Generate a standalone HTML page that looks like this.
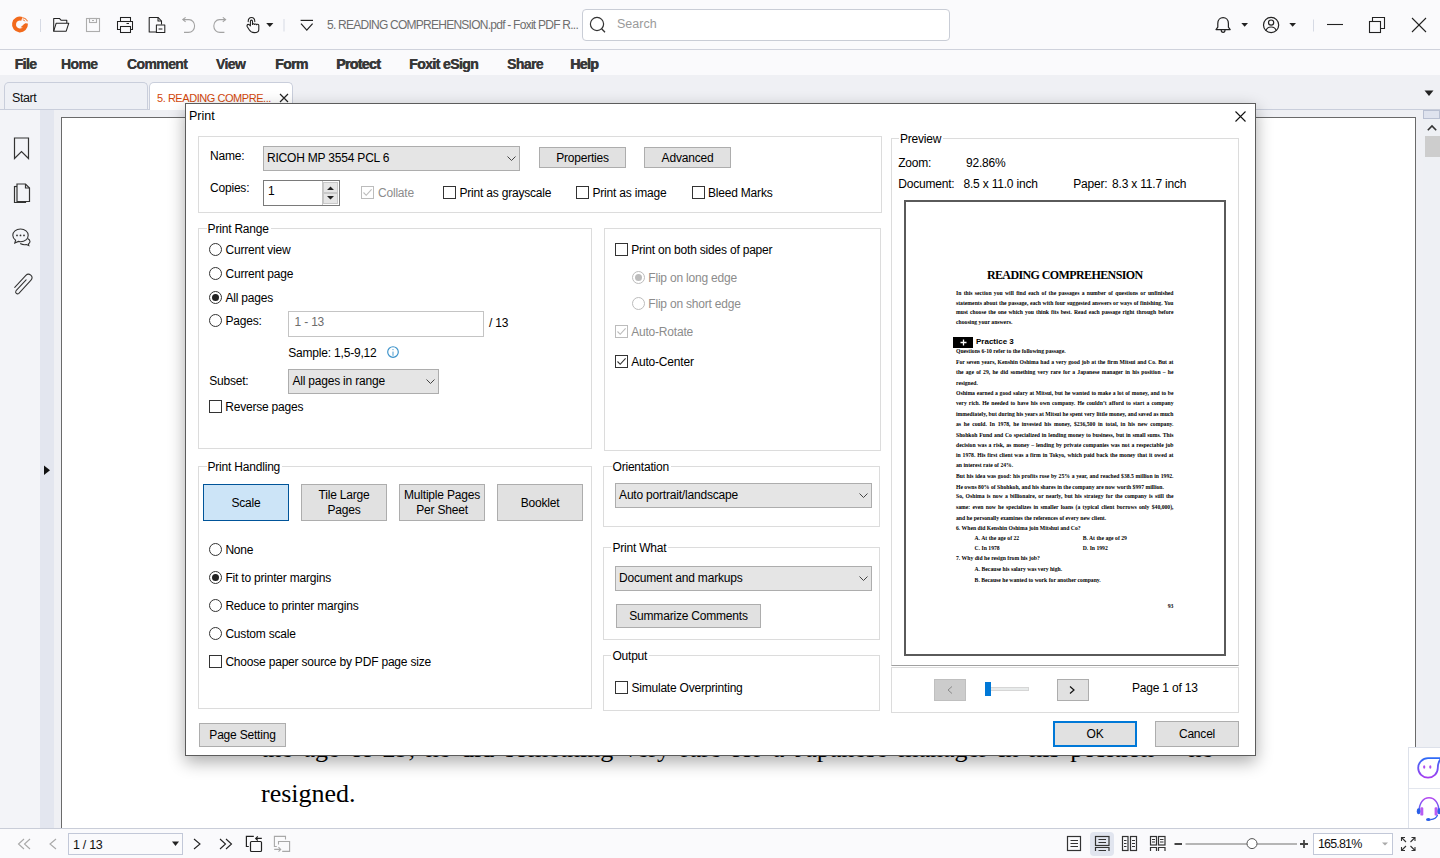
<!DOCTYPE html>
<html><head><meta charset="utf-8">
<style>
*{margin:0;padding:0;box-sizing:border-box}
html,body{width:1440px;height:858px;overflow:hidden;background:#f7f8fb;font-family:"Liberation Sans",sans-serif;color:#000}
.a{position:absolute}
.t{position:absolute;white-space:nowrap;font-size:12px;line-height:15px;letter-spacing:-0.2px}
svg{position:absolute;overflow:visible}
/* app chrome */
#top{left:0;top:0;width:1440px;height:49px;background:#fafafc}
#topline{left:0;top:49px;width:1440px;height:1px;background:#cfd2dc}
#menu{left:0;top:50px;width:1440px;height:25px;background:#fafafc}
.mi{position:absolute;top:56px;font-size:14px;font-weight:bold;color:#383838;line-height:17px;white-space:nowrap;letter-spacing:-0.6px}
#tabbar{left:0;top:75px;width:1440px;height:35px;background:#eff0f4}
#sidebar{left:0;top:110px;width:40px;height:718px;background:#f3f4f8}
#stripe{left:40px;top:110px;width:14px;height:718px;background:#e3e6ef}
#docarea{left:54px;top:110px;width:1366px;height:718px;background:#eff0f4}
#page{left:61px;top:117px;width:1355px;height:720px;background:#fff;border:1px solid #6a6a6a}
#scroll{left:1420px;top:110px;width:20px;height:718px;background:#eef0f5}
#status{left:0;top:828px;width:1440px;height:30px;background:#fafafc;border-top:1px solid #c9cdd8}
/* dialog */
#shadow{left:185px;top:104px;width:1071px;height:652px;box-shadow:0 4px 18px rgba(0,0,0,0.35)}
#dlg{left:185px;top:103px;width:1071px;height:653px;background:#fff;border:1px solid #5a5a5a}
.grp{position:absolute;border:1px solid #dcdcdc}
.gl{position:absolute;background:#fff;padding:0 2px 0 1px;font-size:12px;line-height:15px;white-space:nowrap;letter-spacing:-0.2px}
.btn{position:absolute;background:#e1e1e1;border:1px solid #adadad;font-size:12px;text-align:center;white-space:nowrap;letter-spacing:-0.2px}
.cb{position:absolute;width:13px;height:13px;border:1px solid #333;background:#fff}
.rd{position:absolute;width:13px;height:13px;border:1px solid #333;border-radius:50%;background:#fff}
.rd.on::after{content:"";position:absolute;left:2px;top:2px;width:7px;height:7px;border-radius:50%;background:#1a1a1a}
.combo{position:absolute;background:#e5e5e5;border:1px solid #adadad;font-size:12px;white-space:nowrap;letter-spacing:-0.2px}
.dis{color:#8c8c8c}

.pv{position:absolute;white-space:nowrap;font-family:"Liberation Serif",serif;font-weight:bold;line-height:8px;color:#000}
.bgtxt{position:absolute;white-space:nowrap;font-family:"Liberation Serif",serif;font-size:26px;line-height:30px;color:#000}
</style></head><body>
<div id="top" class="a"></div>
<div id="topline" class="a"></div>
<div id="menu" class="a"></div>
<div id="tabbar" class="a"></div>
<div id="sidebar" class="a"></div>
<div id="stripe" class="a"></div>
<div id="docarea" class="a"></div>
<div id="page" class="a"></div>
<div id="scroll" class="a"></div>
<div id="status" class="a"></div>
<div class="bgtxt" style="left:261px;top:733.7px;width:952px;text-align:justify;text-align-last:justify">the age of 29, he did something very rare for a Japanese manager in his position – he</div>
<div class="bgtxt" style="left:261px;top:778.5px">resigned.</div>
<svg style="left:0;top:828px" width="1440" height="30"><g fill="none" stroke="#a8a8a8" stroke-width="1.1"><path d="M24 11 L18.5 16 L24 21 M30 11 L24.5 16 L30 21"/><path d="M56 11 L50 16 L56 21"/></g><g fill="none" stroke="#222" stroke-width="1.1"><path d="M194 11 L200 16 L194 21"/><path d="M220 11 L225.5 16 L220 21 M226 11 L231.5 16 L226 21"/></g><g fill="none" stroke="#222" stroke-width="1.2"><path d="M253.8 8.4 H246.4 V18.5 H248.8"/><path d="M261.8 10.4 H255.8 M257.8 8.3 L255.7 10.4 L257.8 12.5"/><rect x="250.5" y="13.5" width="11" height="10" rx="1"/></g><g fill="none" stroke="#a8a8a8" stroke-width="1.1"><path d="M276.8 18.5 H274.4 V8.4 H285.5 V11.5"/><path d="M278.5 16.6 V13.5 H289.6 V23.4 H282.2"/><path d="M274.2 21.4 H280.7 M278.5 19.2 L280.7 21.4 L278.5 23.6"/></g><path d="M172 13.5 H179 L175.5 18 Z" fill="#222"/><rect x="1090" y="4" width="24" height="24" rx="4" fill="#e1e5ef"/><g fill="none" stroke="#333" stroke-width="1.2"><rect x="1067.5" y="8.5" width="13" height="14"/><path d="M1070.5 12.5 H1078 M1070.5 15.5 H1078 M1070.5 18.5 H1078"/><rect x="1095.5" y="8.5" width="13.5" height="9"/><path d="M1098.5 11.5 H1106 M1098.5 14.5 H1106"/><path d="M1095.5 23 V19.5 H1109 V23 M1098.5 22.5 H1106"/><rect x="1122.5" y="8.5" width="5.5" height="14"/><rect x="1130.5" y="8.5" width="6" height="14"/><path d="M1124 12.5 H1126.5 M1124 15.5 H1126.5 M1124 18.5 H1126.5 M1132 12.5 H1135 M1132 15.5 H1135 M1132 18.5 H1135"/><rect x="1150.5" y="8.5" width="6" height="8.5"/><rect x="1158.5" y="8.5" width="6.5" height="8.5"/><path d="M1152 11.5 H1155 M1152 14 H1155 M1160 11.5 H1163.5 M1160 14 H1163.5"/><path d="M1150.5 23 V19.5 H1156.5 V23 M1158.5 23 V19.5 H1165 V23"/></g><g fill="none" stroke="#444" stroke-width="1.8"><path d="M1174.5 16 H1182 M1300 16 H1308 M1304 12 V20"/></g><line x1="1185.5" y1="16" x2="1297" y2="16" stroke="#b5b5b5" stroke-width="2"/><circle cx="1252" cy="15.6" r="5" fill="#fff" stroke="#555" stroke-width="1"/><rect x="1313.5" y="5.5" width="79" height="21" fill="#fff" stroke="#c2c8d8"/><path d="M1382 14.5 H1388 L1385 17.5 Z" fill="#aaa"/><g fill="none" stroke="#333" stroke-width="1.1"><path d="M1401.5 13 V9.5 H1405 M1401.5 9.5 L1406 14 M1415 13 V9.5 H1411.5 M1415 9.5 L1410.5 14 M1401.5 19 V22.5 H1405 M1401.5 22.5 L1406 18 M1415 19 V22.5 H1411.5 M1415 22.5 L1410.5 18"/></g></svg>
<div class="t" style="left:73px;top:838px;font-size:12.5px;letter-spacing:-0.3px;color:#111">1 / 13</div>
<div class="a" style="left:68px;top:833px;width:115px;height:22px;border:1px solid #c2c8d8;background:transparent"></div>
<div class="t" style="left:1318px;top:837px;font-size:12.5px;letter-spacing:-0.85px;color:#111">165.81%</div>
<div class="a" style="left:1416px;top:110px;width:7px;height:718px;background:#eff0f4"></div>
<div class="a" style="left:1423px;top:110px;width:17px;height:718px;background:#eef0f4"></div>
<div class="a" style="left:1423px;top:110px;width:17px;height:9px;background:#dfe3ee;border:1px solid #b9c0d2"></div>
<svg style="left:1426px;top:124px" width="12" height="8"><path d="M1.8 6.2 L6 2 L10.2 6.2" fill="none" stroke="#333" stroke-width="1.6"/></svg>
<div class="a" style="left:1425px;top:136px;width:15px;height:21px;background:#cdcdcd"></div>
<div class="a" style="left:1408px;top:747px;width:32px;height:81px;background:#fff;border:1px solid #dde1ea;border-right:none;border-bottom:none"></div>
<div class="a" style="left:1409px;top:788px;width:31px;height:1px;background:#e3e6ee"></div>
<svg style="left:1408px;top:747px" width="32" height="81">
<defs><linearGradient id="g1" x1="0" y1="0" x2="0" y2="1"><stop offset="0" stop-color="#2f6bf7"/><stop offset="1" stop-color="#a53ef0"/></linearGradient>
<linearGradient id="g2" x1="0" y1="0" x2="0" y2="1"><stop offset="0" stop-color="#b548f0"/><stop offset="1" stop-color="#3f6cf2"/></linearGradient></defs>
<path d="M33 11.2 H20 C14.6 11.2 10.2 15.5 10.2 20.9 C10.2 26.3 14.6 30.6 20 30.6 C25.4 30.6 29.8 26.3 29.8 20.9 C29.8 17.4 30.6 14.4 33 11.2 Z" fill="none" stroke="url(#g1)" stroke-width="1.8"/>
<ellipse cx="16.2" cy="20" rx="1.1" ry="1.8" fill="#b04ff0"/><ellipse cx="22.3" cy="20" rx="1.1" ry="1.8" fill="#b04ff0"/>
<path d="M11 65 C11 56 15.4 50.8 21 50.8 C26.6 50.8 31 56 31 65" fill="none" stroke="url(#g2)" stroke-width="1.4"/>
<rect x="12.3" y="60.2" width="3" height="8.4" rx="1.2" fill="#b85cf2"/><rect x="26.6" y="60.2" width="3" height="8.4" rx="1.2" fill="#b85cf2"/>
<ellipse cx="10.6" cy="64.2" rx="1.8" ry="3" fill="#2b5fe8"/><ellipse cx="31.2" cy="64.2" rx="1.8" ry="3" fill="#2b5fe8"/>
<path d="M29.5 68 C28.6 71 26 72.4 22.4 72.6" fill="none" stroke="#2b5fe8" stroke-width="1.2"/>
<ellipse cx="20.4" cy="72.6" rx="2.4" ry="1.5" fill="#2b5fe8"/>
</svg>
<!-- toolbar icons -->
<svg style="left:0;top:0" width="1440" height="49" viewBox="0 0 1440 49">
 <!-- logo -->
 <g>
  <path d="M25.78 23.99 A5.9 5.9 0 1 1 21.92 18.96" fill="none" stroke="#f26a1c" stroke-width="4"/>
  <path d="M20.6 27.2 L25.2 23.2 L27.6 23.4 L27.2 26.4 C25.6 27.6 23.2 28 20.6 27.2 Z" fill="#f26a1c"/>
  <path d="M22.4 17.6 C24.6 18 26.4 19.2 27.6 21.2" fill="none" stroke="#f48a4c" stroke-width="1.2"/>
  <path d="M22.8 19.8 C23.8 20.1 24.6 20.6 25.2 21.3" fill="none" stroke="#f26a1c" stroke-width="0.9"/>
 </g>
 <line x1="40.5" y1="19" x2="40.5" y2="32" stroke="#d6dae4" stroke-width="1"/>
 <!-- open folder -->
 <g fill="none" stroke="#222" stroke-width="1.05" stroke-linejoin="round">
  <path d="M53.7 31.2 V18.4 H59.4 L61 20.2 H66.8 V23"/>
  <path d="M53.7 31.2 L56.2 23.2 H68.8 L66.2 31.2 Z"/>
 </g>
 <!-- save (disabled) -->
 <g fill="none" stroke="#adadad" stroke-width="1.1">
  <rect x="86.5" y="18.5" width="13" height="13"/>
  <rect x="89.5" y="18.5" width="7" height="4"/>
  <line x1="92" y1="20.5" x2="94" y2="20.5"/>
 </g>
 <!-- printer -->
 <g fill="none" stroke="#222" stroke-width="1.05">
  <rect x="120.5" y="17.5" width="10" height="4"/>
  <path d="M120.5 29.5 H117.5 V21.5 H132.5 V29.5 H130.5"/>
  <rect x="120.5" y="26.5" width="10" height="6"/>
  <line x1="126.5" y1="23.5" x2="129" y2="23.5"/>
 </g>
 <!-- doc with clipboard -->
 <g fill="none" stroke="#222" stroke-width="1.05" stroke-linejoin="round">
  <path d="M156 32 H149.2 V17.4 H158 L161.5 21 V24.4"/>
  <path d="M158 17.4 V21 H161.5"/>
  <rect x="156.4" y="25" width="8.4" height="7.4"/>
  <line x1="158.6" y1="29" x2="162.4" y2="29"/>
 </g>
 <!-- undo / redo -->
 <g fill="none" stroke="#a3a3a3" stroke-width="1.1">
  <path d="M183 19.6 H189 C192.4 19.6 194.6 22.6 194.6 26 C194.6 29.6 192 32.4 188.4 32.4 H184"/>
  <path d="M185.6 17.4 L182.8 19.6 L185.6 21.8"/>
  <path d="M225.6 19.6 H219.4 C216 19.6 213.8 22.6 213.8 26 C213.8 29.6 216.4 32.4 220 32.4 H224.4"/>
  <path d="M222.8 17.4 L225.6 19.6 L222.8 21.8"/>
 </g>
 <!-- hand -->
 <g fill="none" stroke="#222" stroke-width="1.1" stroke-linejoin="round" stroke-linecap="round">
  <path d="M250.4 25.8 V21.2 C250.4 19.8 252.5 19.8 252.5 21.2 V24.4 M252.5 24.4 C252.7 23.5 254.3 23.5 254.4 24.5 M254.4 24.5 C254.7 23.8 256.4 23.8 256.6 24.8 M256.6 24.8 C256.9 24 258.7 24.1 258.8 25.2 V29.4 C258.8 31.4 256.8 32.6 254.4 32.6 C252 32.6 250.2 31.6 249.2 29.8 L247.3 26.8 C246.7 25.8 247.1 24.4 248.2 24.4 C249.2 24.4 249.8 25 250.4 25.8"/>
  <path d="M248.2 21.6 C248.2 16.2 254.8 16.2 254.8 21.6"/>
 </g>
 <path d="M266.2 23 H273.4 L269.8 27 Z" fill="#222"/>
 <line x1="284" y1="19" x2="284" y2="31.5" stroke="#d6dae4"/>
 <g fill="none" stroke="#222" stroke-width="1.2">
  <line x1="300.6" y1="20.4" x2="313" y2="20.4"/>
  <path d="M301 23.6 L306.8 30.2 L312.6 23.6"/>
 </g>
 <!-- right icons -->
 <g fill="none" stroke="#222" stroke-width="1.2" stroke-linejoin="round">
  <path d="M1216 29.6 H1230.2 L1228.4 27.2 V23.4 C1228.4 19.8 1226 17.6 1223.1 17.6 C1220.2 17.6 1217.8 19.8 1217.8 23.4 V27.2 Z"/>
  <path d="M1221.2 30 C1221.2 31.6 1222 32.4 1223.1 32.4 C1224.2 32.4 1225 31.6 1225 30"/>
  <circle cx="1271.1" cy="25" r="7.6"/>
  <circle cx="1271.1" cy="22.6" r="2.6"/>
  <path d="M1266 30.6 C1266.8 28 1268.6 27 1271.1 27 C1273.6 27 1275.4 28 1276.2 30.6"/>
 </g>
 <path d="M1241.3 23 H1248 L1244.65 26.8 Z M1289.3 23 H1296 L1292.65 26.8 Z" fill="#222"/>
 <line x1="1313.5" y1="19.5" x2="1313.5" y2="31.5" stroke="#d6dae4"/>
 <g fill="none" stroke="#222" stroke-width="1.1">
  <line x1="1327" y1="24.5" x2="1343" y2="24.5"/>
  <rect x="1369.5" y="21.5" width="11" height="11"/>
  <path d="M1372.5 21.5 V17.5 H1384.5 V28.5 H1380.5"/>
  <line x1="1412" y1="18" x2="1426" y2="32"/>
  <line x1="1426" y1="18" x2="1412" y2="32"/>
 </g>
</svg>
<div class="t" style="left:327px;top:18px;color:#6e6e6e;letter-spacing:-0.75px">5. READING COMPREHENSION.pdf - Foxit PDF R...</div>
<div class="a" style="left:582px;top:9px;width:368px;height:32px;background:#fff;border:1px solid #c9cdd6;border-radius:4px"></div>
<svg style="left:588px;top:15px" width="20" height="20"><circle cx="9" cy="9" r="6.6" fill="none" stroke="#333" stroke-width="1.2"/><line x1="13.6" y1="13.8" x2="17" y2="17.2" stroke="#333" stroke-width="1.3"/></svg>
<div class="t" style="left:617px;top:17px;color:#9a9a9a;font-size:12.5px;letter-spacing:0">Search</div>

<!-- tabs -->
<div class="a" style="left:4px;top:82px;width:144px;height:28px;background:#eef0f5;border:1px solid #c9cedb;border-bottom:none;border-radius:5px 5px 0 0"></div>
<div class="t" style="left:12px;top:91px;color:#111;font-size:12.5px;letter-spacing:-0.4px">Start</div>
<div class="a" style="left:149px;top:82px;width:144px;height:28px;background:#fff;border:1px solid #c9cedb;border-bottom:none;border-radius:5px 5px 0 0"></div>
<div class="t" style="left:157px;top:91px;color:#d2470b;font-size:11px;letter-spacing:-0.45px">5. READING COMPRE...</div>
<svg style="left:279px;top:93px" width="10" height="10"><path d="M1 1 L9 9 M9 1 L1 9" stroke="#222" stroke-width="1.2"/></svg>
<div class="a" style="left:0;top:109px;width:149px;height:1px;background:#c9cedb"></div>
<div class="a" style="left:293px;top:109px;width:1147px;height:1px;background:#c9cedb"></div>
<svg style="left:1424px;top:90px" width="10" height="7"><path d="M0.5 0.5 H9.5 L5 6 Z" fill="#222"/></svg>

<!-- sidebar icons -->
<svg style="left:0;top:110px" width="61" height="718">
 <g fill="none" stroke="#333" stroke-width="1.2" stroke-linejoin="miter">
  <path d="M14.5 28 H28.5 V48.5 L21.5 41.5 L14.5 48.5 Z"/>
  <path d="M17 76.5 V74 H25.5 L29.5 78 V91.5 H17 Z"/>
  <path d="M25.5 74 V78 H29.5"/>
  <path d="M17 76.5 H14.5 V92.5 H25.5 V91.5"/>
  <path d="M14.5 76.5 H17"/>
 </g>
 <g fill="none" stroke="#333" stroke-width="1.1">
  <path d="M20.5 119 C16 119 12.8 121.8 12.8 125.3 C12.8 127.3 13.8 129 15.6 130.2 L14.8 133 L18.4 131.4 C19.1 131.6 19.8 131.7 20.5 131.7 C25 131.7 28.2 128.9 28.2 125.3 C28.2 121.8 25 119 20.5 119 Z"/>
  <path d="M27.6 128.6 C29.2 129.4 30 130.4 30 131.6 C30 132.6 29.4 133.4 28.4 134 L28.8 135.6 L26.4 134.6 C24.2 135 22 134.6 20.2 133.6"/>
 </g>
 <g fill="#333"><circle cx="17" cy="125.4" r="0.9"/><circle cx="20.5" cy="125.4" r="0.9"/><circle cx="24" cy="125.4" r="0.9"/></g>
 <path d="M14.75 177.44 L25.85 165.39 A3.5 3.5 0 0 1 31.00 170.13 L18.88 183.28 A1.9 1.9 0 0 1 16.09 180.71 L26.11 169.83" fill="none" stroke="#333" stroke-width="1.05" stroke-linecap="round"/>
 <path d="M44 355.4 L50 360.2 L44 365 Z" fill="#111"/>
</svg>
<div class="mi" style="left:15px">File</div>
<div class="mi" style="left:61px">Home</div>
<div class="mi" style="left:127px">Comment</div>
<div class="mi" style="left:216px">View</div>
<div class="mi" style="left:275px">Form</div>
<div class="mi" style="left:336px">Protect</div>
<div class="mi" style="left:409px">Foxit eSign</div>
<div class="mi" style="left:507px">Share</div>
<div class="mi" style="left:570px">Help</div>

<div class="mi" style="left:14.4px">File</div>
<div class="mi" style="left:61px">Home</div>
<div class="mi" style="left:127px">Comment</div>
<div class="mi" style="left:216px">View</div>
<div class="mi" style="left:275.6px">Form</div>
<div class="mi" style="left:336.7px">Protect</div>
<div class="mi" style="left:409.6px">Foxit eSign</div>
<div class="mi" style="left:507.3px">Share</div>
<div class="mi" style="left:570.7px">Help</div>

<!-- ===== DIALOG ===== -->
<div class="a" style="left:185px;top:103px;width:1071px;height:653px;box-shadow:0 6px 16px rgba(0,0,0,0.33);background:#fff"></div>
<div class="a" style="left:185px;top:103px;width:1071px;height:653px;border:1px solid #5c5c5c;background:#fff"></div>
<div class="t " style="left:189px;top:109.0px;font-size:12.5px;letter-spacing:0">Print</div>
<svg style="left:1235px;top:111px" width="11" height="11"><path d="M0.5 0.5 L10.5 10.5 M10.5 0.5 L0.5 10.5" stroke="#111" stroke-width="1.1"/></svg>
<div class="a" style="left:198px;top:136px;width:684px;height:77px;border:1px solid #dcdcdc"></div>
<div class="t " style="left:210px;top:149.0px;">Name:</div>
<div class="a" style="left:263px;top:146px;width:257px;height:25px;background:#e5e5e5;border:1px solid #adadad"></div>
<div class="t " style="left:267px;top:151.0px;">RICOH MP 3554 PCL 6</div>
<svg style="left:507px;top:156px" width="9" height="5"><path d="M0.5 0.5 L4.5 4.5 L8.5 0.5" fill="none" stroke="#444" stroke-width="1"/></svg>
<div class="a" style="left:539px;top:147px;width:87px;height:21px;background:#e1e1e1;border:1px solid #adadad;"></div>
<div class="t" style="left:539px;width:87px;text-align:center;top:151.0px">Properties</div>
<div class="a" style="left:644px;top:147px;width:87px;height:21px;background:#e1e1e1;border:1px solid #adadad;"></div>
<div class="t" style="left:644px;width:87px;text-align:center;top:151.0px">Advanced</div>
<div class="t " style="left:210px;top:181.0px;">Copies:</div>
<div class="a" style="left:263px;top:180px;width:77px;height:26px;border:1px solid #7a7a7a;background:#fff"></div>
<div class="a" style="left:322px;top:181px;width:17px;height:24px;border-left:1px solid #c4c4c4;background:#fff"></div>
<div class="a" style="left:323px;top:182px;width:15px;height:11px;background:#e6e6e6;border:1px solid #c8c8c8"></div>
<div class="a" style="left:323px;top:193px;width:15px;height:11px;background:#e6e6e6;border:1px solid #c8c8c8"></div>
<svg style="left:326px;top:185px" width="9" height="16"><path d="M1 5 L4.5 1.5 L8 5 Z M1 11 L4.5 14.5 L8 11 Z" fill="#222"/></svg>
<div class="t " style="left:268px;top:184.0px;">1</div>
<svg style="left:361px;top:186px" width="13" height="13"><rect x="0.5" y="0.5" width="12" height="12" fill="#fff" stroke="#bcbcbc" stroke-width="1"/><path d="M2.5 6.5 L5.2 9.3 L10.6 3.4" fill="none" stroke="#bcbcbc" stroke-width="1.1"/></svg>
<div class="t dis" style="left:378px;top:186.0px;">Collate</div>
<svg style="left:443px;top:186px" width="13" height="13"><rect x="0.5" y="0.5" width="12" height="12" fill="#fff" stroke="#333" stroke-width="1"/></svg>
<div class="t " style="left:459.5px;top:186.0px;">Print as grayscale</div>
<svg style="left:576px;top:186px" width="13" height="13"><rect x="0.5" y="0.5" width="12" height="12" fill="#fff" stroke="#333" stroke-width="1"/></svg>
<div class="t " style="left:592.5px;top:186.0px;">Print as image</div>
<svg style="left:692px;top:186px" width="13" height="13"><rect x="0.5" y="0.5" width="12" height="12" fill="#fff" stroke="#333" stroke-width="1"/></svg>
<div class="t " style="left:708px;top:186.0px;">Bleed Marks</div>
<div class="a" style="left:198px;top:228px;width:394px;height:221px;border:1px solid #dcdcdc"></div>
<div class="gl" style="left:206.6px;top:221.9px">Print Range</div>
<svg style="left:209px;top:243px" width="13" height="13"><circle cx="6.5" cy="6.5" r="6" fill="#fff" stroke="#333" stroke-width="1"/></svg>
<div class="t " style="left:225.5px;top:243.0px;">Current view</div>
<svg style="left:209px;top:267px" width="13" height="13"><circle cx="6.5" cy="6.5" r="6" fill="#fff" stroke="#333" stroke-width="1"/></svg>
<div class="t " style="left:225.5px;top:267.0px;">Current page</div>
<svg style="left:209px;top:291px" width="13" height="13"><circle cx="6.5" cy="6.5" r="6" fill="#fff" stroke="#333" stroke-width="1"/><circle cx="6.5" cy="6.5" r="3.5" fill="#222"/></svg>
<div class="t " style="left:225.5px;top:291.0px;">All pages</div>
<svg style="left:209px;top:314px" width="13" height="13"><circle cx="6.5" cy="6.5" r="6" fill="#fff" stroke="#333" stroke-width="1"/></svg>
<div class="t " style="left:225.5px;top:314.0px;">Pages:</div>
<div class="a" style="left:288px;top:311px;width:196px;height:26px;border:1px solid #c4c4c4;background:#fff"></div>
<div class="t " style="left:294.6px;top:315.0px;color:#6d6d6d">1 - 13</div>
<div class="t " style="left:489px;top:316.0px;">/ 13</div>
<div class="t " style="left:288.3px;top:346.0px;">Sample: 1,5-9,12</div>
<svg style="left:386.5px;top:346px" width="12" height="12"><circle cx="6" cy="6" r="5.3" fill="none" stroke="#3b92ca" stroke-width="1.15"/><path d="M6 5.6 V9.8" stroke="#3b92ca" stroke-width="0.9"/><circle cx="6" cy="3.6" r="0.55" fill="#3b92ca"/></svg>
<div class="t " style="left:209.2px;top:374.0px;">Subset:</div>
<div class="a" style="left:288px;top:369px;width:151px;height:25px;background:#e5e5e5;border:1px solid #adadad"></div>
<div class="t " style="left:292.4px;top:374.0px;">All pages in range</div>
<svg style="left:425.5px;top:379px" width="9" height="5"><path d="M0.5 0.5 L4.5 4.5 L8.5 0.5" fill="none" stroke="#444" stroke-width="1"/></svg>
<svg style="left:209px;top:400px" width="13" height="13"><rect x="0.5" y="0.5" width="12" height="12" fill="#fff" stroke="#333" stroke-width="1"/></svg>
<div class="t " style="left:225.2px;top:400.0px;">Reverse pages</div>
<div class="a" style="left:604px;top:228px;width:277px;height:223px;border:1px solid #dcdcdc"></div>
<svg style="left:615px;top:243px" width="13" height="13"><rect x="0.5" y="0.5" width="12" height="12" fill="#fff" stroke="#333" stroke-width="1"/></svg>
<div class="t " style="left:631.2px;top:243.0px;">Print on both sides of paper</div>
<svg style="left:632px;top:271px" width="13" height="13"><circle cx="6.5" cy="6.5" r="6" fill="#fff" stroke="#bcbcbc" stroke-width="1"/><circle cx="6.5" cy="6.5" r="3.5" fill="#bcbcbc"/></svg>
<div class="t dis" style="left:648.3px;top:271.0px;">Flip on long edge</div>
<svg style="left:632px;top:297px" width="13" height="13"><circle cx="6.5" cy="6.5" r="6" fill="#fff" stroke="#bcbcbc" stroke-width="1"/></svg>
<div class="t dis" style="left:648.3px;top:297.0px;">Flip on short edge</div>
<svg style="left:615px;top:325px" width="13" height="13"><rect x="0.5" y="0.5" width="12" height="12" fill="#fff" stroke="#bcbcbc" stroke-width="1"/><path d="M2.5 6.5 L5.2 9.3 L10.6 3.4" fill="none" stroke="#bcbcbc" stroke-width="1.1"/></svg>
<div class="t dis" style="left:631.2px;top:325.0px;">Auto-Rotate</div>
<svg style="left:615px;top:355px" width="13" height="13"><rect x="0.5" y="0.5" width="12" height="12" fill="#fff" stroke="#333" stroke-width="1"/><path d="M2.5 6.5 L5.2 9.3 L10.6 3.4" fill="none" stroke="#333" stroke-width="1.1"/></svg>
<div class="t " style="left:631.2px;top:355.0px;">Auto-Center</div>
<div class="a" style="left:198px;top:466px;width:394px;height:243px;border:1px solid #dcdcdc"></div>
<div class="gl" style="left:206.5px;top:459.6px">Print Handling</div>
<div class="a" style="left:203px;top:484px;width:86px;height:37px;background:#cce4f7;border:1px solid #005499"></div>
<div class="t" style="left:203px;width:86px;text-align:center;top:495.7px">Scale</div>
<div class="a" style="left:301px;top:484px;width:86px;height:37px;background:#e1e1e1;border:1px solid #adadad;"></div>
<div class="t" style="left:301px;width:86px;text-align:center;top:488.0px">Tile Large</div>
<div class="t" style="left:301px;width:86px;text-align:center;top:503.0px">Pages</div>
<div class="a" style="left:399px;top:484px;width:86px;height:37px;background:#e1e1e1;border:1px solid #adadad;"></div>
<div class="t" style="left:399px;width:86px;text-align:center;top:488.0px">Multiple Pages</div>
<div class="t" style="left:399px;width:86px;text-align:center;top:503.0px">Per Sheet</div>
<div class="a" style="left:497px;top:484px;width:86px;height:37px;background:#e1e1e1;border:1px solid #adadad;"></div>
<div class="t" style="left:497px;width:86px;text-align:center;top:495.7px">Booklet</div>
<svg style="left:209px;top:543px" width="13" height="13"><circle cx="6.5" cy="6.5" r="6" fill="#fff" stroke="#333" stroke-width="1"/></svg>
<div class="t " style="left:225.4px;top:543.0px;">None</div>
<svg style="left:209px;top:571px" width="13" height="13"><circle cx="6.5" cy="6.5" r="6" fill="#fff" stroke="#333" stroke-width="1"/><circle cx="6.5" cy="6.5" r="3.5" fill="#222"/></svg>
<div class="t " style="left:225.4px;top:571.0px;">Fit to printer margins</div>
<svg style="left:209px;top:599px" width="13" height="13"><circle cx="6.5" cy="6.5" r="6" fill="#fff" stroke="#333" stroke-width="1"/></svg>
<div class="t " style="left:225.4px;top:599.0px;">Reduce to printer margins</div>
<svg style="left:209px;top:627px" width="13" height="13"><circle cx="6.5" cy="6.5" r="6" fill="#fff" stroke="#333" stroke-width="1"/></svg>
<div class="t " style="left:225.4px;top:627.0px;">Custom scale</div>
<svg style="left:209px;top:655px" width="13" height="13"><rect x="0.5" y="0.5" width="12" height="12" fill="#fff" stroke="#333" stroke-width="1"/></svg>
<div class="t " style="left:225.4px;top:655.0px;">Choose paper source by PDF page size</div>
<div class="a" style="left:603px;top:466px;width:277px;height:61px;border:1px solid #dcdcdc"></div>
<div class="gl" style="left:611.5px;top:459.7px">Orientation</div>
<div class="a" style="left:615px;top:483px;width:257px;height:25px;background:#e5e5e5;border:1px solid #adadad"></div>
<div class="t " style="left:619.1px;top:488.0px;">Auto portrait/landscape</div>
<svg style="left:858.5px;top:493px" width="9" height="5"><path d="M0.5 0.5 L4.5 4.5 L8.5 0.5" fill="none" stroke="#444" stroke-width="1"/></svg>
<div class="a" style="left:603px;top:547px;width:277px;height:93px;border:1px solid #dcdcdc"></div>
<div class="gl" style="left:611.4px;top:540.8px">Print What</div>
<div class="a" style="left:615px;top:566px;width:257px;height:25px;background:#e5e5e5;border:1px solid #adadad"></div>
<div class="t " style="left:619.1px;top:571.0px;">Document and markups</div>
<svg style="left:858.5px;top:576px" width="9" height="5"><path d="M0.5 0.5 L4.5 4.5 L8.5 0.5" fill="none" stroke="#444" stroke-width="1"/></svg>
<div class="a" style="left:616px;top:604px;width:145px;height:24px;background:#e1e1e1;border:1px solid #adadad;"></div>
<div class="t" style="left:616px;width:145px;text-align:center;top:609.2px">Summarize Comments</div>
<div class="a" style="left:603px;top:655px;width:277px;height:56px;border:1px solid #dcdcdc"></div>
<div class="gl" style="left:611.4px;top:648.6px">Output</div>
<svg style="left:615px;top:681px" width="13" height="13"><rect x="0.5" y="0.5" width="12" height="12" fill="#fff" stroke="#333" stroke-width="1"/></svg>
<div class="t " style="left:631.4px;top:681.0px;">Simulate Overprinting</div>
<div class="a" style="left:891px;top:138px;width:348px;height:528px;border:1px solid #dcdcdc;border-bottom:1px solid #a0a0a0"></div>
<div class="gl" style="left:899px;top:131.8px">Preview</div>
<div class="t " style="left:898.2px;top:156.0px;">Zoom:</div>
<div class="t " style="left:966px;top:156.0px;">92.86%</div>
<div class="t " style="left:898.2px;top:177.0px;">Document:</div>
<div class="t " style="left:963.5px;top:177.0px;">8.5 x 11.0 inch</div>
<div class="t " style="left:1073.2px;top:177.0px;">Paper:</div>
<div class="t " style="left:1112.1px;top:177.0px;">8.3 x 11.7 inch</div>
<div class="a" style="left:904px;top:200px;width:322px;height:456px;border:2px solid #5a5a5a;background:#fff"></div>
<div class="a" style="left:891px;top:667px;width:348px;height:46px;border:1px solid #dcdcdc"></div>
<div class="a" style="left:934px;top:679px;width:32px;height:22px;background:#cccccc;border:1px solid #bfbfbf"></div>
<svg style="left:946px;top:685px" width="8" height="10"><path d="M6 1.5 L2 5 L6 8.5" fill="none" stroke="#8a8a8a" stroke-width="1"/></svg>
<div class="a" style="left:990px;top:687px;width:39px;height:4px;background:#e7eaea;border:1px solid #d6d6d6"></div>
<div class="a" style="left:985px;top:682px;width:6px;height:14px;background:#0078d7"></div>
<div class="a" style="left:1057px;top:679px;width:32px;height:22px;background:#e1e1e1;border:1px solid #adadad"></div>
<svg style="left:1068px;top:685px" width="8" height="10"><path d="M2 1.5 L6 5 L2 8.5" fill="none" stroke="#111" stroke-width="1.2"/></svg>
<div class="t " style="left:1132px;top:681.0px;">Page 1 of 13</div>
<div class="a" style="left:199px;top:723px;width:87px;height:24px;background:#e1e1e1;border:1px solid #adadad"></div>
<div class="t" style="left:199px;width:87px;text-align:center;top:727.5px">Page Setting</div>
<div class="a" style="left:1053px;top:721px;width:84px;height:26px;background:#e1e1e1;border:2px solid #0078d7"></div>
<div class="t" style="left:1053px;width:84px;text-align:center;top:727.0px">OK</div>
<div class="a" style="left:1155px;top:721px;width:84px;height:26px;background:#e1e1e1;border:1px solid #adadad;"></div>
<div class="t" style="left:1155px;width:84px;text-align:center;top:727.0px">Cancel</div>
<div class="pv" style="left:956px;width:217.5px;text-align:center;top:269.0px;font-size:12px;line-height:13px;letter-spacing:-0.6px">READING COMPREHENSION</div>
<div class="pv" style="left:956px;top:289.0px;font-size:5.7px;width:217.5px;text-align:justify;text-align-last:justify;">In this section you will find each of the passages a number of questions or unfinished</div>
<div class="pv" style="left:956px;top:298.9px;font-size:5.7px;width:217.5px;text-align:justify;text-align-last:justify;">statements about the passage, each with four suggested answers or ways of finishing. You</div>
<div class="pv" style="left:956px;top:307.8px;font-size:5.7px;width:217.5px;text-align:justify;text-align-last:justify;">must choose the one which you think fits best. Read each passage right through before</div>
<div class="pv" style="left:956px;top:317.8px;font-size:5.7px;width:217.5px;">choosing your answers.</div>
<div class="a" style="left:953px;top:337px;width:20px;height:11px;background:#000"></div>
<svg style="left:959px;top:338px" width="9" height="9"><path d="M4.5 1.5 V7.5 M1.5 4.5 H7.5" stroke="#fff" stroke-width="1.3"/></svg>
<div class="pv" style="left:976px;top:337.2px;font-family:'Liberation Sans',sans-serif;font-size:8px;line-height:9px;font-weight:bold">Practice 3</div>
<div class="pv" style="left:956px;top:347.2px;font-size:5.7px;">Questions 6-10 refer to the following passage.</div>
<div class="pv" style="left:956px;top:357.9px;font-size:5.7px;width:217.5px;text-align:justify;text-align-last:justify;">For seven years, Kenshin Oshima had a very good job at the firm Mitsui and Co. But at</div>
<div class="pv" style="left:956px;top:368.2px;font-size:5.7px;width:217.5px;text-align:justify;text-align-last:justify;">the age of 29, he did something very rare for a Japanese manager in his position – he</div>
<div class="pv" style="left:956px;top:378.5px;font-size:5.7px;width:217.5px;">resigned.</div>
<div class="pv" style="left:956px;top:389.0px;font-size:5.7px;width:217.5px;text-align:justify;text-align-last:justify;">Oshima earned a good salary at Mitsui, but he wanted to make a lot of money, and to be</div>
<div class="pv" style="left:956px;top:398.8px;font-size:5.7px;width:217.5px;text-align:justify;text-align-last:justify;">very rich. He needed to have his own company. He couldn’t afford to start a company</div>
<div class="pv" style="left:956px;top:409.6px;font-size:5.7px;width:217.5px;text-align:justify;text-align-last:justify;">immediately, but during his years at Mitsui he spent very little money, and saved as much</div>
<div class="pv" style="left:956px;top:419.8px;font-size:5.7px;width:217.5px;text-align:justify;text-align-last:justify;">as he could. In 1978, he invested his money, $236,500 in total, in his new company.</div>
<div class="pv" style="left:956px;top:430.7px;font-size:5.7px;width:217.5px;text-align:justify;text-align-last:justify;">Shohkoh Fund and Co specialized in lending money to business, but in small sums. This</div>
<div class="pv" style="left:956px;top:440.7px;font-size:5.7px;width:217.5px;text-align:justify;text-align-last:justify;">decision was a risk, as money – lending by private companies was not a respectable job</div>
<div class="pv" style="left:956px;top:450.8px;font-size:5.7px;width:217.5px;text-align:justify;text-align-last:justify;">in 1978. His first client was a firm in Tokyo, which paid back the money that it owed at</div>
<div class="pv" style="left:956px;top:461.4px;font-size:5.7px;width:217.5px;">an interest rate of 24%.</div>
<div class="pv" style="left:956px;top:471.6px;font-size:5.7px;width:217.5px;text-align:justify;text-align-last:justify;">But his idea was good: his profits rose by 25% a year, and reached $38.5 million in 1992.</div>
<div class="pv" style="left:956px;top:482.6px;font-size:5.7px;width:217.5px;">He owns 80% of Shohkoh, and his shares in the company are now worth $997 million.</div>
<div class="pv" style="left:956px;top:492.4px;font-size:5.7px;width:217.5px;text-align:justify;text-align-last:justify;">So, Oshima is now a billionaire, or nearly, but his strategy for the company is still the</div>
<div class="pv" style="left:956px;top:502.5px;font-size:5.7px;width:217.5px;text-align:justify;text-align-last:justify;">same: even now he specializes in smaller loans (a typical client borrows only $40,000),</div>
<div class="pv" style="left:956px;top:513.9px;font-size:5.7px;width:217.5px;">and he personally examines the references of every new client.</div>
<div class="pv" style="left:956px;top:523.5px;font-size:5.7px;width:217.5px;">6. When did Kenshin Oshima join Mitshui and Co?</div>
<div class="pv" style="left:956px;top:554.4px;font-size:5.7px;width:217.5px;">7. Why did he resign from his job?</div>
<div class="pv" style="left:974.6px;top:534.1px;font-size:5.7px;">A. At the age of 22</div>
<div class="pv" style="left:1082.7px;top:534.1px;font-size:5.7px;">B. At the age of 29</div>
<div class="pv" style="left:974.6px;top:544.3px;font-size:5.7px;">C. In 1978</div>
<div class="pv" style="left:1082.7px;top:544.3px;font-size:5.7px;">D. In 1992</div>
<div class="pv" style="left:974.6px;top:565.4px;font-size:5.7px;">A. Because his salary was very high.</div>
<div class="pv" style="left:974.6px;top:575.5px;font-size:5.7px;">B. Because he wanted to work for another company.</div>
<div class="pv" style="left:1167.7px;top:601.7px;font-size:5.7px;">93</div>
</body></html>
